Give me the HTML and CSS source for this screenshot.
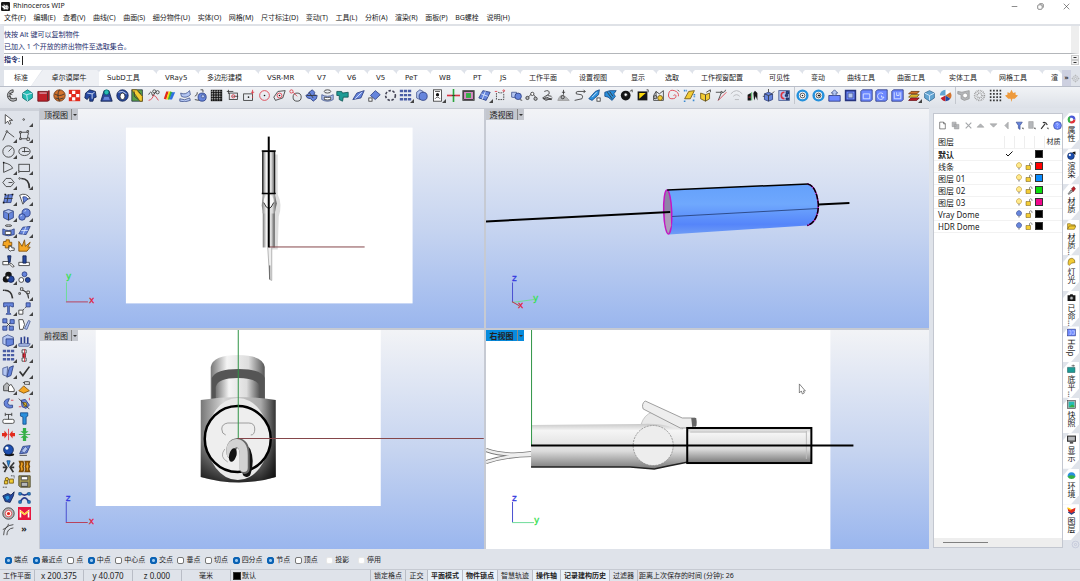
FILE: index.html
```
<!DOCTYPE html>
<html lang="zh-CN">
<head>
    <meta charset="UTF-8">
    <meta name="viewport" content="width=device-width, initial-scale=1.0">
    <title>Rhinoceros WIP</title>
    <link rel="stylesheet" href="styles.css">
</head>
<body>

<header class="titlebar">
    <svg class="logo" viewBox="0 0 16 16"><rect class="bk" width="16" height="16" rx="2"/><path class="wh" d="M1 6l3 1 1-4 2 3 4-1 3 4-2 5-4-1-3 1-1-3-3-2z"/><path d="M6 8l3 2M11 8v3"/></svg>
    <span>Rhinoceros WIP</span>
    <div class="window-buttons">
        <button aria-label="最小化"><svg viewBox="0 0 16 16"><path d="M3 8h10"/></svg></button>
        <button aria-label="还原"><svg viewBox="0 0 16 16"><rect x="3" y="5" width="8" height="8" rx="2"/><path d="M6 3h5a2 2 0 0 1 2 2v5"/></svg></button>
        <button aria-label="关闭"><svg viewBox="0 0 16 16"><path d="M3 3l10 10M13 3L3 13"/></svg></button>
    </div>
</header>

<nav class="menubar">
    <div class="menus">
        <a href="#">文件(F)</a>
        <a href="#">编辑(E)</a>
        <a href="#">查看(V)</a>
        <a href="#">曲线(C)</a>
        <a href="#">曲面(S)</a>
        <a href="#">细分物件(U)</a>
        <a href="#">实体(O)</a>
        <a href="#">网格(M)</a>
        <a href="#">尺寸标注(D)</a>
        <a href="#">变动(T)</a>
        <a href="#">工具(L)</a>
        <a href="#">分析(A)</a>
        <a href="#">渲染(R)</a>
        <a href="#">面板(P)</a>
        <a href="#">BG螺栓</a>
        <a href="#">说明(H)</a>
    </div>
</nav>

<section class="command">
    <div class="history">
        <p>快按 Alt 键可以复制物件</p>
        <p>已加入 1 个开放的挤出物件至选取集合。</p>
    </div>
    <div class="prompt">
        <label for="cmd">指令:</label>
        <input type="text" id="cmd">
        <div class="spin"><button aria-label="上"></button><button aria-label="下"></button></div>
    </div>
</section>

<div class="tabs">
    <button class="w27">标准</button>
    <button class="w68 active">卓尔谟犀牛</button>
    <button class="w58">SubD工具</button>
    <button class="w42">VRay5</button>
    <button class="w60">多边形建模</button>
    <button class="w50">VSR-MR</button>
    <button class="w30">V7</button>
    <button class="w29">V6</button>
    <button class="w29">V5</button>
    <button class="w34">PeT</button>
    <button class="w34">WB</button>
    <button class="w27">PT</button>
    <button class="w29">JS</button>
    <button class="w50">工作平面</button>
    <button class="w52">设置视图</button>
    <button class="w34">显示</button>
    <button class="w36">选取</button>
    <button class="w68">工作视窗配置</button>
    <button class="w42">可见性</button>
    <button class="w36">变动</button>
    <button class="w50">曲线工具</button>
    <button class="w52">曲面工具</button>
    <button class="w50">实体工具</button>
    <button class="w52">网格工具</button>
    <button class="last">渲</button>
    <div class="tabs-end"><button class="chev">»</button><svg viewBox="0 0 16 16"><circle cx="8" cy="8" r="5"/><circle cx="8" cy="8" r="2"/><path d="M8 1v3M8 12v3M1 8h3M12 8h3"/></svg></div>
</div>

<div class="toolbar">
    <div class="group g50">
        <button><svg viewBox="0 0 16 16"><path class="gy" d="M10 1a7 7 0 0 0 0 14l4-1v-3l-4 1a4 4 0 0 1 0-8z"/><path d="M5 5l4 2M4 9h3M6 13l2-2"/></svg></button>
        <button><svg viewBox="0 0 16 16"><path class="cy" d="M8 1l6 4v6l-6 4-6-4V5z"/><path class="lite" d="M2 5l5 2 7-2M7 7l1 8"/></svg></button>
        <button><svg viewBox="0 0 16 16"><path class="dr" d="M1 3h12l2-1v12l-2 1H1z"/><path class="lite" d="M3 5h9"/><path d="M13 4v10"/></svg></button>
        <button><svg viewBox="0 0 16 16"><circle class="og" cx="8" cy="8" r="7"/><path d="M2 6q6 4 12 0M3 11q5 3 10 0M8 1q-4 6 0 14"/></svg></button>
        <button><svg viewBox="0 0 16 16"><rect class="rf" x="1" y="1" width="14" height="14"/><path class="wf" d="M5 2h4v4H5zM10 6h4v4h-4zM5 10h4v4H5zM1 6h3v4H1z"/></svg></button>
        <button><svg viewBox="0 0 16 16"><path class="nv" d="M2 5l5-4 7 2 1 7-3 1-1 4H7V9l-3 4-3-2z"/><path class="lite" d="M4 5l6 1 3-2M10 6v6"/></svg></button>
        <button><svg viewBox="0 0 16 16"><path class="nv" d="M5 2h6l4 13H1z"/><path class="bl" d="M5 9h6l2 5H3z"/><circle class="cy" cx="8" cy="4" r="3"/></svg></button>
        <button><svg viewBox="0 0 16 16"><circle class="nv" cx="8" cy="8" r="7"/><ellipse class="wh" cx="8" cy="9" rx="3" ry="4"/><path class="lite" d="M3 4l5-1 5 3"/></svg></button>
        <button><svg viewBox="0 0 16 16"><path class="gn" d="M1 1h13v14H1z"/><path class="yl" d="M1 1h6l7 8v6h-3z"/><path d="M4 3v6l5 4M9 3l3 3"/></svg></button>
        <button><svg viewBox="0 0 16 16"><path class="rd" d="M2 14q5-1 6-7M7 7q4 1 7 7"/><path d="M2 7q3-6 4-1t4-2"/><circle cx="9" cy="3" r="2"/><circle cx="13" cy="4" r="2"/></svg></button>
        <button><svg viewBox="0 0 16 16"><path class="rf" d="M4 3h3L4 13l-3-1z"/><path class="yf" d="M7 3h3L7 13l-3 0z"/><path class="gf" d="M9 3l3 1-4 9-2 0z"/><path class="bf" d="M11 4l4 0-4 9-3 0z"/></svg></button>
        <button><svg viewBox="0 0 16 16"><path class="lb" d="M2 5q6 3 11-3l1 5q-5 5-11 2zM1 12q6 3 12-1l1 3q-7 3-13 1z"/></svg></button>
        <button><svg viewBox="0 0 16 16"><circle class="bl" cx="10" cy="10" r="5"/><circle class="lb" cx="11" cy="9" r="2"/><path d="M1 9q4-2 3-5M8 1h3v3M1 13l5 1"/></svg></button>
        <button><svg viewBox="0 0 16 16"><rect class="bk" x="1" y="1" width="14" height="14"/><path class="check" d="M1 3h14M1 6h14M1 9h14M1 12h14M3 1v14M6 1v14M9 1v14M12 1v14"/></svg></button>
        <button><svg viewBox="0 0 16 16"><rect x="4" y="5" width="10" height="8"/><path d="M1 3h8M3 1v5M9 9h6M7 9h1"/><circle class="rd" cx="9" cy="9" r="2"/></svg></button>
        <button><svg viewBox="0 0 16 16"><rect x="2" y="6" width="11" height="8"/><path class="rd" d="M13 1v6M11 4h4M13 9v2"/><circle class="bk" cx="8" cy="10" r="1"/></svg></button>
        <button><svg viewBox="0 0 16 16"><circle class="rd" cx="8" cy="8" r="6"/><circle class="bk" cx="8" cy="8" r="1"/></svg></button>
        <button><svg viewBox="0 0 16 16"><path d="M1 10l5-7 9-1-3 9-9 3z"/><circle class="rd" cx="8" cy="8" r="3"/><circle class="bk" cx="8" cy="8" r="1"/></svg></button>
        <button><svg viewBox="0 0 16 16"><circle cx="10" cy="10" r="5"/><circle class="rd" cx="3" cy="3" r="2"/><path class="rd" d="M5 4l5 5"/></svg></button>
        <button><svg viewBox="0 0 16 16"><path class="bl" d="M5 4l4-3 3 3-1 3 4 1-1 4-4 3-3-3-4-1-2-3 3-2z"/><path d="M5 4l5 7M2 8h12"/></svg></button>
        <button><svg viewBox="0 0 16 16"><path class="lb" d="M1 7q7 4 14 0v6q-7 4-14 0z"/><path class="wh" d="M4 10q4 1 8 0v3q-4 1-8 0z"/><ellipse cx="8" cy="3" rx="4" ry="2"/></svg></button>
        <button><svg viewBox="0 0 16 16"><path class="tl" d="M1 3h6l1 2 7-1v6H9l-1 5-4-2V8H1z"/></svg></button>
        <button><svg viewBox="0 0 16 16"><path class="bl" d="M1 13L6 5l9-3-4 9z"/><path class="lite" d="M4 12l8-8"/></svg></button>
        <button><svg viewBox="0 0 16 16"><path class="bl" d="M3 8l6-6 6 5-6 6z"/><rect class="wh" x="1" y="11" width="4" height="4"/></svg></button>
        <button><svg viewBox="0 0 16 16"><circle class="dots" cx="8" cy="8" r="6"/></svg></button>
        <button class="fly"><svg viewBox="0 0 16 16"><path class="dotgrid" d="M3 1v14M8 1v14M13 1v14"/></svg></button>
        <button><svg viewBox="0 0 16 16"><path class="lb" d="M2 4l4-3 4 2v8l-4 2-4-2z"/><circle class="bl" cx="10" cy="9" r="5"/></svg></button>
        <button class="fly"><svg viewBox="0 0 16 16"><rect class="wh" x="3" y="1" width="10" height="14"/><circle class="bk" cx="8" cy="7" r="2"/><path d="M5 12q3-4 6 0M5 3h6"/></svg></button>
        <button><svg viewBox="0 0 16 16"><path class="rd thick" d="M0 8h16"/><path class="grn thick" d="M8 0v16"/><path d="M6 8h4"/></svg></button>
        <button><svg viewBox="0 0 16 16"><rect class="wh" x="1" y="2" width="14" height="12"/><rect class="pk" x="2" y="3" width="12" height="10"/><rect class="gf" x="5" y="5" width="6" height="6"/></svg></button>
        <button class="fly"><svg viewBox="0 0 16 16"><path class="bl" d="M1 11l5-9 9 2-5 10z"/><path class="lite" d="M4 6l8 3M9 3l-4 10"/></svg></button>
        <button><svg viewBox="0 0 16 16"><path d="M3 13V5M5 4q4 2 8-1M12 6v7H4" stroke-dasharray="2 1"/><circle class="rd" cx="12" cy="2" r="1"/><path class="rd" d="M1 3h3"/></svg></button>
        <button><svg viewBox="0 0 16 16"><path class="lb" d="M2 4l6 0v7l-6-1z"/><circle class="bl" cx="10" cy="9" r="4"/><path d="M12 13l3 1"/></svg></button>
        <button><svg viewBox="0 0 16 16"><path d="M3 11l6-6 4 5"/><circle class="gy" cx="3" cy="11" r="2"/><circle class="wh" cx="9" cy="6" r="2"/><circle class="gy" cx="13" cy="12" r="2"/></svg></button>
        <button><svg viewBox="0 0 16 16"><path d="M4 3q7-3 6 3l-8 5 4 3 8-3M8 8l5 1"/><path class="gy" d="M3 12l4-2 6 3z"/></svg></button>
        <button><svg viewBox="0 0 16 16"><path d="M8 1v6M6 4h4"/><path class="gy lt" d="M1 14q3-8 7-6t7 6z"/><circle class="gy" cx="7" cy="10" r="2"/></svg></button>
        <button><svg viewBox="0 0 16 16"><path d="M15 3H6q-3 0-2 3l6 1q3 1 1 5L2 14"/><path d="M13 1l2 2-2 2"/></svg></button>
        <button><svg viewBox="0 0 16 16"><path class="cb" d="M1 12L9 3l5-2-1 6-8 7z"/><path class="lite" d="M5 10l6-6"/><rect class="wh" x="11" y="11" width="4" height="4"/></svg></button>
        <button><svg viewBox="0 0 16 16"><path class="cb" d="M1 4l6-2 8 0-3 4 2 3-4 5-5-4-4-1z"/><path d="M4 4l6 8M7 3l4 6"/></svg></button>
        <button><svg viewBox="0 0 16 16"><circle class="bk" cx="7" cy="8" r="6"/><circle class="wh" cx="7" cy="7" r="2"/><path d="M12 3l3-2v3"/></svg></button>
        <button><svg viewBox="0 0 16 16"><rect class="bk" x="2" y="3" width="12" height="11"/><path class="yf" d="M4 12V5h8z"/><path d="M13 1h2v3"/></svg></button>
        <button><svg viewBox="0 0 16 16"><path d="M2 14V8l3-5 4 3 5-4v12zM5 3v9"/><circle class="yl" cx="10" cy="11" r="3"/><circle class="gy" cx="4" cy="10" r="2"/></svg></button>
        <button><svg viewBox="0 0 16 16"><path class="rd" d="M8 8q3-2 3 1t-5 3-4-6 7-4 5 7"/><path d="M13 1l2 2"/></svg></button>
        <button><svg viewBox="0 0 16 16"><path class="yl" d="M2 12L7 3l7-1-5 10z"/><path class="dotb" d="M1 2h4M12 14h3M1 15h3M14 6v4"/></svg></button>
        <button><svg viewBox="0 0 16 16"><path class="yl" d="M2 5l6 2 5-2v7l-5 3-6-3z"/><path d="M8 7v8M9 4l5-3v3"/></svg></button>
        <button><svg viewBox="0 0 16 16"><path d="M1 4h7L4 14M8 4q4 1 5-3"/><path class="rd" d="M4 14L14 4"/><circle class="wh" cx="8" cy="4" r="1"/></svg></button>
        <button><svg viewBox="0 0 16 16"><path class="pale" d="M1 6q7-8 14 0M4 9q4-4 8 0M6 13h5"/></svg></button>
        <button><svg viewBox="0 0 16 16"><path class="bk" d="M2 7l4-2v9H2zM9 5l2-3 3 3 0 9-2-5-2 5z"/><path class="grn" d="M7 4v10"/><path class="rd" d="M3 10h3"/></svg></button>
        <button><svg viewBox="0 0 16 16"><path class="bl" d="M3 6l5-2 5 2v7l-5 2-5-2z"/><path d="M3 6l5 2 5-2M8 8v7M8 0v4M1 9h2M13 5l2-2"/></svg></button>
        <button><svg viewBox="0 0 16 16"><rect class="lb" x="1" y="2" width="13" height="12"/><path class="rd thick" d="M8 4q-4 0-4 4t4 4"/><path class="nv" d="M10 3h3v3h-3zM9 7h3v2H9zM10 11h3v2h-3z"/></svg></button>
    </div>
    <div class="group g10">
        <button><svg viewBox="0 0 16 16"><circle class="ring" cx="8" cy="8" r="6"/><circle class="wh" cx="8" cy="8" r="3"/><circle class="bk" cx="8" cy="8" r="1"/></svg></button>
        <button><svg viewBox="0 0 16 16"><circle class="ring" cx="8" cy="8" r="6"/><circle class="wh" cx="8" cy="8" r="3"/><path class="bk" d="M7 7h3v2H7z"/></svg></button>
        <button><svg viewBox="0 0 16 16"><path class="vb" d="M1 8h14v7H1z"/><path class="lb" d="M6 8V5H4l4-4 4 4h-2v3z"/></svg></button>
        <button><svg viewBox="0 0 16 16"><path class="vb thick" d="M2 2h12v12H2z"/><path class="lb" d="M5 5h6v6H5z"/></svg></button>
        <button><svg viewBox="0 0 16 16"><path class="vb" d="M1 3l2-2h12v12l-2 2H1z"/><path class="lite" d="M4 6h8v6H4z"/></svg></button>
        <button><svg viewBox="0 0 16 16"><path class="vb" d="M1 3l2-2h12v12l-2 2H1z"/><path class="lite" d="M10 6a4 4 0 1 0 1 4H8V8"/></svg></button>
        <button><svg viewBox="0 0 16 16"><path class="vb" d="M1 3l2-2h12v12l-2 2H1z"/><path class="lite" d="M4 4v8h8V4M7 4v4h3V4"/></svg></button>
        <button class="fly"><svg viewBox="0 0 16 16"><path class="dr" d="M2 14l3-3h10l-3 3z"/><path class="yl" d="M2 10l3-3h10l-3 3z"/><path class="og" d="M2 6l3-3h10l-3 3z"/></svg></button>
        <button><svg viewBox="0 0 16 16"><path class="sb" d="M2 5l6-3 6 3v6l-6 4-6-4z"/><path class="lite" d="M2 5l6 3 6-3M8 8v6"/></svg></button>
        <button><svg viewBox="0 0 16 16"><circle class="wf" cx="8" cy="8" r="7"/><path class="dr nos" d="M8 8V15A7 7 0 0 1 2 11z"/><path class="og nos" d="M8 8l6-4a7 7 0 0 1 0 8z"/><path class="nv nos" d="M8 8l6 4a7 7 0 0 1-6 3z"/><path class="sb nos" d="M8 8L1 8a7 7 0 0 1 7-7z"/></svg></button>
    </div>
    <div class="group g4">
        <button><svg viewBox="0 0 16 16"><path class="gy lt" d="M1 3l5 1 9-2v10l-6 2-4-2V7L1 6z"/><circle class="wh lt" cx="10" cy="8" r="3"/></svg></button>
        <button><svg viewBox="0 0 16 16"><circle class="mesh" cx="8" cy="8" r="6"/><circle class="mesh" cx="8" cy="8" r="3"/></svg></button>
        <button><svg viewBox="0 0 16 16"><path class="dotgrid blk" d="M2 1v14M6 1v14M10 1v14M14 1v14"/></svg></button>
        <button><svg viewBox="0 0 16 16"><path class="lf" d="M8 1l2 4 3-1 0 3 3 1-4 4-3 0-1 4-1-4-3 0-4-4 3-1V4l3 1z"/></svg></button>
    </div>
</div>

<main>
    <aside class="sidebar">
        <button><svg viewBox="0 0 16 16"><path class="wh" d="M4 2v11l3-3 2 4 2-1-2-4h4z"/></svg></button>
        <button class="fly"><svg viewBox="0 0 16 16"><circle class="wh" cx="7" cy="8" r="1"/></svg></button>
        <button class="fly"><svg viewBox="0 0 16 16"><path d="M1 14L6 3l9 7"/><circle class="wh" cx="6" cy="3" r="1"/></svg></button>
        <button class="fly"><svg viewBox="0 0 16 16"><path d="M3 4h8q3 0 1 4v4M3 4v8h9"/><path class="wh" d="M2 3h2v2H2zM11 2h2v2h-2zM11 11h3v3h-3zM2 11h2v2H2z"/></svg></button>
        <button class="fly"><svg viewBox="0 0 16 16"><circle cx="8" cy="8" r="7"/><path d="M8 8l4-4"/></svg></button>
        <button class="fly"><svg viewBox="0 0 16 16"><ellipse cx="8" cy="8" rx="7" ry="5"/><path d="M8 3v6M5 8h9"/></svg></button>
        <button class="fly"><svg viewBox="0 0 16 16"><path d="M2 14V2q10 2 11 7L2 14"/><circle class="bk" cx="2" cy="2" r="1"/></svg></button>
        <button class="fly"><svg viewBox="0 0 16 16"><rect x="1" y="4" width="13" height="9"/><circle class="wh" cx="1" cy="13" r="1"/></svg></button>
        <button class="fly"><svg viewBox="0 0 16 16"><path d="M5 3h6l4 5-4 5H5L1 8z"/><path d="M8 8h5"/></svg></button>
        <button class="fly"><svg viewBox="0 0 16 16"><path class="thick" d="M4 3q10 0 10 12"/><circle class="wh" cx="2" cy="3" r="1"/></svg></button>
        <button class="fly"><svg viewBox="0 0 16 16"><path class="bl" d="M4 4l9-1-2 10-9 0z"/><path d="M8 3L6 13M3 8h10"/><path class="bk" d="M3 2h2v2H3zM12 2h2v2h-2zM1 12h2v2H1z"/></svg></button>
        <button class="fly"><svg viewBox="0 0 16 16"><path class="wh" d="M2 4q8-4 13 4l-5 1-4 6z"/><path class="bl" d="M6 6q5-1 6 3l-5 4z"/></svg></button>
        <button class="fly"><svg viewBox="0 0 16 16"><path class="bl" d="M2 4l6-2 6 2v8l-6 3-6-3z"/><path class="lb" d="M2 4l6-2 6 2-6 3z"/><path d="M8 7v8"/></svg></button>
        <button class="fly"><svg viewBox="0 0 16 16"><circle class="bl" cx="10" cy="6" r="5"/><circle class="bl" cx="5" cy="11" r="4"/><path class="lite" d="M8 4l2-1M3 10l2-1"/></svg></button>
        <button class="fly"><svg viewBox="0 0 16 16"><path class="bl" d="M1 6q7 4 14 0v7q-7 3-14 0z"/><path class="wh" d="M4 9h7v4H4z"/><ellipse cx="8" cy="2" rx="4" ry="1"/></svg></button>
        <button class="fly"><svg viewBox="0 0 16 16"><path class="bl" d="M1 12l5-8 9-1-5 10z"/><path class="lite" d="M4 8l8 0M10 3l-4 10"/></svg></button>
        <button><svg viewBox="0 0 16 16"><path class="og2" d="M2 3h3V1h4v3h3v4H8v3H4V8H1z"/><path class="wh" d="M9 9h3v2h3v3h-3l-2 1-2-2z"/></svg></button>
        <button><svg viewBox="0 0 16 16"><path class="og2" d="M1 15V3l4 6 3-8 1 8 6-5-3 6 3 0-4 5z"/></svg></button>
        <button><svg viewBox="0 0 16 16"><path class="wh" d="M1 8h7v4H1zM11 10l4 4-2 1-4-4z"/><path class="nv" d="M7 1h4l-1 8H8z"/></svg></button>
        <button><svg viewBox="0 0 16 16"><path class="wh" d="M1 9h13v4H1z"/><path class="nv" d="M6 1h4v9H6z"/></svg></button>
        <button class="fly"><svg viewBox="0 0 16 16"><circle class="bk" cx="8" cy="5" r="4"/><circle class="bk" cx="5" cy="10" r="4"/><circle class="nv" cx="11" cy="10" r="4"/><circle class="wh" cx="7" cy="8" r="2"/></svg></button>
        <button><svg viewBox="0 0 16 16"><circle class="bl" cx="8" cy="4" r="3"/><circle class="wh" cx="4" cy="11" r="3"/><circle class="nv" cx="12" cy="11" r="3"/></svg></button>
        <button><svg viewBox="0 0 16 16"><path class="thick" d="M3 4q9 0 10 10"/><circle class="bk" cx="2" cy="4" r="1"/></svg></button>
        <button class="fly"><svg viewBox="0 0 16 16"><path d="M4 3q8 3 9 11M4 3l8 4 1 7"/><path class="wh" d="M3 1h3v3H3zM1 7h2v2H1zM11 5h3v3h-3z"/></svg></button>
        <button class="fly"><svg viewBox="0 0 16 16"><path class="bl" d="M2 1h12v5h-2l-1-1H9v8l2 2H5l2-2V5H5L4 6H2z"/></svg></button>
        <button class="fly"><svg viewBox="0 0 16 16"><path d="M4 12l8-8" stroke-dasharray="2 1"/><path class="wh" d="M1 10h5v5H1z"/><path class="bl" d="M10 1h5v5h-5z"/></svg></button>
        <button><svg viewBox="0 0 16 16"><path d="M4 4l8 8M12 4l-8 8"/><path class="bl" d="M1 1h5v5H1zM10 2h5v5h-5zM1 10h5v5H1zM9 10h5v5H9z"/></svg></button>
        <button><svg viewBox="0 0 16 16"><path class="wh" d="M1 2h5l2 6-2 6H2z"/><path class="lb" d="M8 13l5-10 2 1-4 10z"/></svg></button>
        <button class="fly"><svg viewBox="0 0 16 16"><path class="lb" d="M1 4l6-3 7 3v8l-7 3-6-3z"/><path class="bl" d="M5 6h9v7l-7 2-2-2z"/></svg></button>
        <button class="fly"><svg viewBox="0 0 16 16"><path class="lb" d="M1 12h14l-2 3H1z"/><path class="nvl" d="M4 4v8M8 3v8M12 4v8"/></svg></button>
        <button class="fly"><svg viewBox="0 0 16 16"><path class="dotgrid" d="M3 1v14M8 1v14M13 1v14"/></svg></button>
        <button class="fly"><svg viewBox="0 0 16 16"><path class="wh" d="M5 1h5v4H5zM5 11h5v4H5z"/><path class="dr" d="M6 6h3v4H6z"/><path class="rd" d="M8 0v16"/></svg></button>
        <button class="fly"><svg viewBox="0 0 16 16"><path class="lb" d="M1 4l6-2-1 12-5-2z"/><path class="bl" d="M9 3l5-2-3 12-5 2z"/></svg></button>
        <button class="fly"><svg viewBox="0 0 16 16"><path class="thick" d="M2 8l4 5L14 2"/></svg></button>
        <button class="fly"><svg viewBox="0 0 16 16"><path class="gy" d="M2 12V6l4-4 4 4v6z"/><path class="wh" d="M8 13V7l3-3 4 6v3z"/></svg></button>
        <button class="fly"><svg viewBox="0 0 16 16"><path class="og2" d="M1 12l6-6 7 6-7 3z"/><path d="M6 2l6-1 2 4"/><path class="wh" d="M8 1h6v3H8z"/></svg></button>
        <button><svg viewBox="0 0 16 16"><path class="bl" d="M9 2q-8 1-6 8 3 5 10 3v-3q-6 1-6-3z"/><path class="rd" d="M11 4h3"/></svg></button>
        <button><svg viewBox="0 0 16 16"><path class="bl" d="M4 4l5-1 5 7-4 4-5-2z"/><path class="yl" d="M6 7l4 0 1 4-3 1z"/><path d="M1 2l13 13"/><path class="rd" d="M14 1v3M1 12h3"/></svg></button>
        <button><svg viewBox="0 0 16 16"><rect class="wh" x="1" y="9" width="14" height="5" rx="2"/><path d="M4 3h8M4 1v4M12 1v4M8 3v6"/></svg></button>
        <button><svg viewBox="0 0 16 16"><path class="cb" d="M3 1h9v4l-2 1v9H6V6L3 5z"/></svg></button>
        <button><svg viewBox="0 0 16 16"><path class="rf" d="M0 6h3V3l4 5-4 5v-3H0zM16 6h-3V3L9 8l4 5v-3h3z"/><path class="rd" d="M8 1v14"/></svg></button>
        <button><svg viewBox="0 0 16 16"><path class="gf" d="M6 0h4v4h3L8 8 3 4h3zM6 16h4v-4h3L8 8l-5 4h3z"/><path class="grn" d="M1 8h14"/></svg></button>
        <button><svg viewBox="0 0 16 16"><ellipse class="bk" cx="9" cy="13" rx="6" ry="2"/><circle class="sph" cx="8" cy="7" r="6"/><circle class="wf" cx="6" cy="5" r="2"/></svg></button>
        <button><svg viewBox="0 0 16 16"><path class="bl" d="M2 12L6 3l9-1-4 9z"/><path class="lb" d="M4 9l5-6 3 3-4 5z"/><path d="M2 14h9"/></svg></button>
        <button><svg viewBox="0 0 16 16"><path class="thick" d="M1 3l5 6-3 6M15 3l-5 6 4 6"/><path class="cb" d="M6 1h4l-2 7z"/><path class="thick" d="M1 9h5M10 9h5"/></svg></button>
        <button><svg viewBox="0 0 16 16"><path class="og2 thick" d="M2 2h4l1 3-1 3 1 3-1 3H2l1-3-1-3 1-3zM9 2h5l-1 3 1 3-1 3 1 3H9l1-3-1-3 1-3z"/></svg></button>
        <button><svg viewBox="0 0 16 16"><path class="yl" d="M3 7h4v4H3zM9 5h5v5H9z"/><path d="M1 15h5M11 1h4v3" stroke-dasharray="2 1"/><circle class="yl" cx="6" cy="5" r="2"/></svg></button>
        <button><svg viewBox="0 0 16 16"><path class="kh" d="M1 1h14v14H3l-2-2z"/><path class="wh" d="M4 2h8v4H4z"/><path class="gy" d="M4 9h8v5H4z"/></svg></button>
        <button><svg viewBox="0 0 16 16"><path class="nv" d="M1 6l6-3 4 2 4-4-1 5-4 8-6-1z"/><path class="cb" d="M3 7l5-2 2 4-4 3z"/></svg></button>
        <button><svg viewBox="0 0 16 16"><path class="nvl" d="M3 3q5 4 10 0M3 13q5-9 10 0"/><path class="cb" d="M1 2h3v3H1zM12 2h3v3h-3zM1 12h3v3H1zM12 12h3v3h-3z"/></svg></button>
        <button><svg viewBox="0 0 16 16"><circle class="gy" cx="8" cy="8" r="7"/><circle class="rd wf2" cx="8" cy="8" r="4"/><circle class="rf" cx="8" cy="8" r="2"/></svg></button>
        <button><svg viewBox="0 0 16 16"><rect class="mred" x="0" y="0" width="16" height="16"/><path class="wl" d="M3 13V5l5 4 5-4v8"/><path class="yel" d="M3 5l5 4 5-4"/></svg></button>
        <button><svg viewBox="0 0 16 16"><path d="M2 15Q2 3 14 2M6 15q0-8 8-9M1 8q6-2 7-7"/></svg></button>
        <button class="more">»</button>
    </aside>

    <section class="viewports">
        <div class="viewport">
            <svg class="scene" viewBox="40 109 444 220" preserveAspectRatio="xMidYMid slice">
                <defs>
                    <linearGradient id="metal"><stop offset="0" stop-color="#777"/><stop offset=".3" stop-color="#f4f4f4"/><stop offset=".7" stop-color="#ddd"/><stop offset="1" stop-color="#555"/></linearGradient>
                    <linearGradient id="metalDown" x2="0" y2="1"><stop offset="0" stop-color="#c8c8c8"/><stop offset=".15" stop-color="#f5f5f5"/><stop offset=".6" stop-color="#dcdcdc"/><stop offset="1" stop-color="#777"/></linearGradient>
                    <linearGradient id="blueDown" x2="0" y2="1"><stop offset="0" stop-color="#64a0fb"/><stop offset=".4" stop-color="#6fa8fd"/><stop offset=".8" stop-color="#5585fa"/><stop offset="1" stop-color="#6f9cf5"/></linearGradient>
                    <linearGradient id="block"><stop offset="0" stop-color="#777"/><stop offset=".3" stop-color="#d5d5d5"/><stop offset=".8" stop-color="#aaa"/><stop offset="1" stop-color="#333"/></linearGradient>
                    <linearGradient id="blockShade" x2="0" y2="1"><stop offset=".5" stop-color="#000" stop-opacity="0"/><stop offset="1" stop-color="#000" stop-opacity=".8"/></linearGradient>
                </defs>
                <rect x="126" y="128" width="287" height="176" fill="#fff"/>
                <path d="M266 155h12v40q5 10 1 22l-1 33h-8z" fill="#ddd"/>
                <rect x="263" y="212" width="12" height="36" fill="url(#metal)"/>
                <path d="M263 194h12l2 10-2 10h-12l-1-8z" fill="url(#metal)"/>
                <ellipse cx="269" cy="202" rx="5" ry="7" fill="#f8f8f8"/>
                <path d="M264 203q5 12 10 0" fill="none" stroke="#333"/>
                <rect x="263" y="152" width="12" height="42" fill="url(#metal)" stroke="#000"/>
                <path d="M262 151.500h14M262 194h14" stroke="#000" stroke-width="1.500"/>
                <path d="M268 248l2 32 2 1 0-33" fill="#eee" stroke="#999" stroke-width=".7"/>
                <path d="M270 266v14" stroke="#555"/>
                <path d="M269 247.500h96" stroke="#85464a"/>
                <path d="M269 137v111" stroke="#000" stroke-width="2"/>
                <path d="M66.500 283v19" stroke="#6fdc9a"/><path d="M66 302.500h22" stroke="#b8435c"/>
                <text class="ax-y" x="66" y="280">y</text><text class="ax-x" x="89" y="304">x</text>
            </svg>
            <div class="vp-label"><span>顶视图</span><button aria-label="视图菜单"></button></div>
        </div>

        <div class="viewport">
            <svg class="scene" viewBox="486 109 443 220" preserveAspectRatio="xMidYMid slice">
                <path d="M667 190.500L808 184.500Q816 186 818 205Q818 222 807 226L669 235z" fill="url(#blueDown)"/>
                <ellipse cx="667.500" cy="212.500" rx="4" ry="22" fill="#8f83a6" stroke="#c615c4" stroke-width="1.500" transform="rotate(-2 667 212)"/>
                <path d="M665 212h5l1 14-3 8q-4-8-3-22z" fill="#b09cba"/>
                <path d="M486 222l184-9.500" stroke="#000" stroke-width="2"/>
                <path d="M667 190.500l141-6" stroke="#000" stroke-width="1.500"/>
                <path d="M672 217l146-8" stroke="#223a70" stroke-width=".8"/>
                <path d="M807 184.500Q816 186 818 205Q818 222 807 226" fill="none" stroke="#c615c4" stroke-width="1.500"/>
                <path d="M807 184.500Q816 186 818 205Q818 222 807 226" fill="none" stroke="#000" stroke-width="1.500" stroke-dasharray="6 1"/>
                <path d="M818 205l31-1.500" stroke="#000" stroke-width="2"/>
                <path d="M512.500 283v20" stroke="#4b50d0"/><path d="M512 303l22-3" stroke="#6fdc9a"/><path d="M512 302l7 4" stroke="#c8304a"/>
                <text class="ax-z" x="512" y="281">z</text><text class="ax-y" x="533" y="301">y</text><text class="ax-x" x="518" y="308">x</text>
            </svg>
            <div class="vp-label"><span>透视图</span><button aria-label="视图菜单"></button></div>
        </div>

        <div class="viewport">
            <svg class="scene" viewBox="40 331 444 219" preserveAspectRatio="xMidYMid slice">
                <rect x="96" y="331" width="285" height="176" fill="#fff"/>
                <path d="M211 400v-32q2-12 27-12t27 12v32z" fill="url(#metal)"/>
                <path d="M212 379q4-9 27-9t26 9v21h-53z" fill="#555"/>
                <path d="M216 400v-12q2-9 22-9t22 9v12z" fill="url(#metal)"/>
                <path d="M201 401q37-6 75 0v77q-36 11-75 0z" fill="url(#block)"/>
                <path d="M201 401q37-6 75 0v77q-36 11-75 0z" fill="url(#blockShade)"/>
                <ellipse cx="238" cy="440" rx="31" ry="41" fill="#e9e9e9"/>
                <circle cx="238" cy="440" r="33" fill="#eee" stroke="#000" stroke-width="2.500"/>
                <path d="M226 436q-4-1-4-6t6-6h21q6 0 6 6t-4 6" fill="none" stroke="#888" stroke-width=".8"/>
                <path d="M225 450q-6 8 3 13" fill="none" stroke="#999" stroke-width=".8"/>
                <path d="M247 452q4 10 0 22" fill="none" stroke="#111" stroke-width="8" stroke-linecap="round"/>
                <path d="M232 455q-2-10 6-11 7 1 7 12l0 14" fill="none" stroke="#666" stroke-width="10" stroke-linecap="round"/>
                <path d="M231 455q-2-10 6-11 7 1 7 12l0 13" fill="none" stroke="#d2d2d2" stroke-width="8" stroke-linecap="round"/>
                <ellipse cx="233" cy="456" rx="3.500" ry="7" fill="#111" transform="rotate(15 233 456)"/>
                <path d="M238.500 331v109" stroke="#2f9446"/><path d="M238 439.500h246" stroke="#85464a"/>
                <path d="M66.500 503v20" stroke="#4b50d0"/><path d="M66 523.500h22" stroke="#b8435c"/>
                <text class="ax-z" x="66" y="502">z</text><text class="ax-x" x="89" y="525">x</text>
            </svg>
            <div class="vp-label"><span>前视图</span><button aria-label="视图菜单"></button></div>
        </div>

        <div class="viewport">
            <svg class="scene" viewBox="486 331 443 219" preserveAspectRatio="xMidYMid slice">
                <rect x="486" y="331" width="344" height="219" fill="#fff"/>
                <path d="M486 451q20 7 46 3M486 463q22-7 46-7" fill="none" stroke="#777" stroke-width="4"/>
                <path d="M486 451q20 7 46 3M486 463q22-7 46-7" fill="none" stroke="#eee" stroke-width="2.500"/>
                <path d="M641 425q3-9 11-12l32 14-6 10z" fill="#e8e8e8" stroke="#aaa" stroke-width=".6"/>
                <path d="M531 426l110-1q20-1 32 4l14 2v32l-22 5-12 2-23-2H531z" fill="url(#metalDown)"/>
                <path d="M531 468h99l24 2 14-3 20-4" fill="none" stroke="#222" stroke-width="1.500"/>
                <path d="M645 402q-4 3-2 8l37 19 14 0q4-4 1-10l-13 0z" fill="#eee" stroke="#888" stroke-width=".8"/>
                <path d="M691 419l5 0v8l-4 1z" fill="#666"/>
                <circle cx="653" cy="446.500" r="20" fill="#ededed" stroke="#888" stroke-dasharray="2 1" stroke-width=".8"/>
                <rect x="687" y="429" width="124" height="35" fill="url(#metalDown)" stroke="#000" stroke-width="2"/>
                <path d="M690 433h116M806 432v28" stroke="#bbb" fill="none"/>
                <path d="M531.500 331v116" stroke="#2f9446"/>
                <path d="M531 446.500h322" stroke="#000" stroke-width="2"/>
                <path d="M512.500 503v20" stroke="#4b50d0"/><path d="M512 523.500h22" stroke="#6fdc9a"/>
                <text class="ax-z" x="512" y="502">z</text><text class="ax-y" x="534" y="524">y</text>
                <path d="M799 385v9l2-2 1 3 2-1-1-2h2z" fill="#fff" stroke="#555" stroke-width=".7"/>
            </svg>
            <div class="vp-label current"><span>右视图</span><button aria-label="视图菜单"></button></div>
        </div>
    </section>

    <aside class="layers">
        <div class="layer-tools">
            <button><svg viewBox="0 0 16 16"><path class="wh" d="M3 2h7l3 3v9H3z"/><path d="M10 2v3h3"/></svg></button>
            <button><svg viewBox="0 0 16 16"><path class="gy lt" d="M2 2h7v8H2zM6 6h8v8H6z"/></svg></button>
            <button><svg viewBox="0 0 16 16"><path class="gyl" d="M3 3l10 10M13 3L3 13"/></svg></button>
            <button><svg viewBox="0 0 16 16"><path class="gy lt" d="M2 11l6-6 6 6z"/></svg></button>
            <button><svg viewBox="0 0 16 16"><path class="gy lt" d="M2 5l6 6 6-6z"/></svg></button>
            <button><svg viewBox="0 0 16 16"><path class="gy lt" d="M11 2L5 8l6 6z"/></svg></button>
            <button><svg viewBox="0 0 16 16"><path class="bl" d="M2 2h11L9 8v7l-3-2V8z"/><path class="bk" d="M12 12h3v3z"/></svg></button>
            <button><svg viewBox="0 0 16 16"><path class="gy lt" d="M3 1h8v12H3z"/><path class="bk" d="M12 12h3v3z"/></svg></button>
            <button><svg viewBox="0 0 16 16"><path class="thick" d="M2 14l7-9M5 3q5-2 8 4"/><path class="bk" d="M12 12h3v3z"/></svg></button>
            <button><svg viewBox="0 0 16 16"><circle class="vb" cx="8" cy="8" r="7"/><path class="lite" d="M6 6q0-3 2-2 3 1 0 4v1M8 11v2"/></svg></button>
        </div>
        <table>
            <thead>
                <tr><th class="name">图层</th><th></th><th></th><th></th><th></th><th class="mat">材质</th></tr>
            </thead>
            <tbody>
                <tr class="default"><td>默认</td><td><svg viewBox="0 0 16 16"><path class="tick" d="M2 8l4 4 9-9"/></svg></td><td></td><td></td><td><i class="sw black"></i></td><td></td></tr>
                <tr><td>线条</td><td></td><td><svg viewBox="0 0 16 16"><use href="#bulb"/></svg></td><td><svg viewBox="0 0 16 16"><use href="#lock"/></svg></td><td><i class="sw red"></i></td><td></td></tr>
                <tr><td>图层 01</td><td></td><td><svg viewBox="0 0 16 16"><use href="#bulb"/></svg></td><td><svg viewBox="0 0 16 16"><use href="#lock"/></svg></td><td><i class="sw blue"></i></td><td></td></tr>
                <tr><td>图层 02</td><td></td><td><svg viewBox="0 0 16 16"><use href="#bulb"/></svg></td><td><svg viewBox="0 0 16 16"><use href="#lock"/></svg></td><td><i class="sw green"></i></td><td></td></tr>
                <tr><td>图层 03</td><td></td><td><svg viewBox="0 0 16 16"><use href="#bulb"/></svg></td><td><svg viewBox="0 0 16 16"><use href="#lock"/></svg></td><td><i class="sw pink"></i></td><td></td></tr>
                <tr><td>Vray Dome</td><td></td><td><svg viewBox="0 0 16 16"><use href="#bulb-off"/></svg></td><td><svg viewBox="0 0 16 16"><use href="#lock"/></svg></td><td><i class="sw black"></i></td><td></td></tr>
                <tr><td>HDR Dome</td><td></td><td><svg viewBox="0 0 16 16"><use href="#bulb-off"/></svg></td><td><svg viewBox="0 0 16 16"><use href="#lock"/></svg></td><td><i class="sw black"></i></td><td></td></tr>
            </tbody>
        </table>
        <div class="scrollbar"><div class="thumb"></div></div>
    </aside>

    <nav class="side-tabs">
        <button><svg viewBox="0 0 16 16"><circle class="w-r" cx="8" cy="8" r="5" pathLength="100"/><circle class="w-g" cx="8" cy="8" r="5" pathLength="100"/><circle class="w-b" cx="8" cy="8" r="5" pathLength="100"/></svg>属性</button>
        <button><svg viewBox="0 0 16 16"><circle class="sph" cx="7" cy="9" r="6"/><path class="bk" d="M9 2l6-1v6z"/><circle class="wf" cx="5" cy="7" r="2"/></svg>渲染</button>
        <button><svg viewBox="0 0 16 16"><path class="gy" d="M2 14L7 7l3 3-7 5z"/><path class="dr" d="M8 5l4-4 3 4-4 5z"/></svg>材质</button>
        <button><svg viewBox="0 0 16 16"><path class="yl" d="M1 13V3h5l2 2h6v3"/><path class="yl" d="M1 13l3-6h12l-3 6z"/></svg>材质…</button>
        <button><svg viewBox="0 0 16 16"><path class="yl" d="M2 9q0-7 7-7 6 2 5 8l-6 1-4 4-2-2z"/></svg>灯光</button>
        <button><svg viewBox="0 0 16 16"><path class="bk" d="M1 4h4l1-2h4l1 2h4v10H1z"/><circle class="gy" cx="8" cy="9" r="3"/></svg>已命…</button>
        <button><svg viewBox="0 0 16 16"><rect class="vb" x="1" y="2" width="14" height="12"/><path class="lite" d="M4 5h3v6H4M9 5h4v6H9"/></svg>Help</button>
        <button><svg viewBox="0 0 16 16"><path class="tl" d="M1 6h13v9H1z"/><path d="M8 3h6M11 1v4"/></svg>底平…</button>
        <button><svg viewBox="0 0 16 16"><rect class="gy" x="1" y="1" width="14" height="14"/><path class="cy nos" d="M3 3h10v10H3z"/><path class="gf" d="M3 13l6-5 4 2v3z"/></svg>快照</button>
        <button><svg viewBox="0 0 16 16"><rect class="gy thick" x="1" y="2" width="14" height="9"/><path class="bk" d="M5 13h6v2H5z"/></svg>显示</button>
        <button><svg viewBox="0 0 16 16"><path class="cb nos" d="M1 10q0-8 7-8t7 8z"/><path class="gf" d="M1 10q7-5 14 0-2 4-7 4t-7-4z"/></svg>环境</button>
        <button class="active"><svg viewBox="0 0 16 16"><path class="nv" d="M2 11l6-3 6 3-6 4z"/><path class="rf" d="M1 3l7 3 7-3-1 6-6 4-6-4z"/><path class="yf" d="M1 2l6 3 0 3-6-3z"/></svg>图层</button>
        <svg class="gear" viewBox="0 0 16 16"><circle cx="8" cy="8" r="6"/><circle cx="8" cy="8" r="2"/></svg>
    </nav>
</main>

<form class="osnap">
    <label><input type="checkbox" checked>端点</label>
    <label><input type="checkbox" checked>最近点</label>
    <label><input type="checkbox">点</label>
    <label><input type="checkbox" checked>中点</label>
    <label><input type="checkbox">中心点</label>
    <label><input type="checkbox" checked>交点</label>
    <label><input type="checkbox">垂点</label>
    <label><input type="checkbox">切点</label>
    <label><input type="checkbox" checked>四分点</label>
    <label><input type="checkbox" checked>节点</label>
    <label><input type="checkbox">顶点</label>
    <label class="plain"><input type="checkbox">投影</label>
    <label class="plain"><input type="checkbox">停用</label>
</form>

<footer class="status">
    <span class="w35">工作平面</span>
    <span class="w49 num">x 200.375</span>
    <span class="w49 num">y 40.070</span>
    <span class="w49 num">z 0.000</span>
    <span class="w49">毫米</span>
    <span class="layer-cell"><i class="sw black"></i>默认</span>
    <button class="w35">锁定格点</button>
    <button class="w22">正交</button>
    <button class="w35 on">平面模式</button>
    <button class="w35 on">物件锁点</button>
    <button class="w35">智慧轨迹</button>
    <button class="w28 on">操作轴</button>
    <button class="w49 on">记录建构历史</button>
    <button class="w28">过滤器</button>
    <span class="saved">距离上次保存的时间 (分钟): 26</span>
</footer>

<svg class="defs">
    <symbol id="bulb" viewBox="0 0 16 16"><path class="yb" d="M5 11Q2 8 3 5q2-4 5-4t5 4q1 3-2 6z"/><path class="bulb-foot" d="M6 13h4M7 15h2"/></symbol>
    <symbol id="bulb-off" viewBox="0 0 16 16"><path class="bl" d="M5 11Q2 8 3 5q2-4 5-4t5 4q1 3-2 6z"/><path class="bulb-foot" d="M6 13h4M7 15h2"/></symbol>
    <symbol id="lock" viewBox="0 0 16 16"><path class="yl" d="M2 7h9v8H2z"/><path d="M9 7V3q2-3 5 0v3"/></symbol>
</svg>

</body>
</html>
```
FILE: styles.css
```
* {
    box-sizing: border-box;
}
body {
    margin: 0;
    height: 100vh;
    display: flex;
    flex-direction: column;
    overflow: hidden;
    background-color: #dfe3ea;
    color: #222;
    font: 7px/12px "Noto Sans", "Noto Sans CJK SC", sans-serif;
}
button {
    margin: 0;
    padding: 0;
    border: none;
    background: none;
    font: inherit;
    color: inherit;
}
a {
    color: inherit;
    text-decoration: none;
}
svg {
    display: block;
    width: 13px;
    height: 13px;
    fill: none;
    stroke: #333;
}
.defs {
    position: absolute;
    width: 0;
    height: 0;
}

/* icon paints */
.bk { fill: #151515; stroke: none; }
.wh { fill: #fff; }
.wf { fill: #fff; stroke: none; }
.wf2 { fill: #fff; }
.gy { fill: #b5b7ba; }
.lt { stroke: #999; }
.gyl { stroke: #a5a7aa; stroke-width: 2; }
.pale { stroke: #b0b2b6; }
.bl { fill: #6685dc; stroke: #2a3c80; }
.lb { fill: #b4c6f2; stroke: #45588f; }
.vb { fill: #6d88ff; stroke: #273580; }
.cb { fill: #2a8fdc; stroke: #164a86; }
.sb { fill: #62a5d2; stroke: #3a6d95; }
.nv { fill: #2648a0; stroke: #10204e; }
.nvl { stroke: #2b3f8f; stroke-width: 2; }
.cy { fill: #25bdb4; stroke: #0c6e6c; }
.tl { fill: #1d9c96; stroke: #155; }
.dr { fill: #c0202a; stroke: #6a1016; }
.og { fill: #d2722c; stroke: #6b3510; }
.og2 { fill: #f5a623; stroke: #7c4c08; }
.yl { fill: #f3cc35; stroke: #6b5310; }
.yb { fill: #ffe98a; stroke: #b58a20; }
.kh { fill: #a79a52; stroke: #443f20; }
.gn { fill: #59a046; stroke: #234; }
.pk { fill: #d58ac4; stroke: #222; }
.rf { fill: #e22a1c; stroke: none; }
.yf { fill: #fbd90c; stroke: none; }
.gf { fill: #33b045; stroke: none; }
.bf { fill: #2d6fe0; stroke: none; }
.lf { fill: #ee9a3c; stroke: none; }
.mred { fill: #e6173f; stroke: none; }
.rd { stroke: #dc3340; }
.grn { stroke: #2aa53c; }
.lite { stroke: #e4eeff; }
.wl { stroke: #fff; stroke-width: 2; }
.yel { stroke: #ffd23a; stroke-width: 2; }
.thick { stroke-width: 2; }
.nos { stroke: none; }
.check { stroke: #ccc; stroke-dasharray: 1 1; }
.dots { stroke: #445; stroke-width: 2; stroke-dasharray: 3 2; }
.dotb { stroke: #3b8ad0; stroke-width: 2; stroke-dasharray: 2 1; }
.dotgrid { stroke: #4a5da6; stroke-width: 4; stroke-dasharray: 3 2; }
.dotgrid.blk { stroke: #333; stroke-width: 2; stroke-dasharray: 2 2; }
.mesh { stroke: #999; stroke-width: 2; stroke-dasharray: 1 1; }
.ring { fill: #fff; stroke: #2591dc; stroke-width: 3; }
.sph { fill: #1d4fb0; stroke: #0b1d4a; }
.bulb-foot { stroke: #666; }
.tick { stroke: #111; stroke-width: 2; }
.w-r, .w-g, .w-b { stroke: #e0343a; stroke-width: 4; stroke-dasharray: 34 66; }
.w-g { stroke: #36b14a; stroke-dashoffset: -33; }
.w-b { stroke: #4a59d8; stroke-dashoffset: -66; }

.titlebar {
    display: flex;
    align-items: center;
    height: 12px;
    padding-left: 1px;
    gap: 3px;
    background-color: #fff;
}
.titlebar .logo {
    width: 9px;
    height: 9px;
}
.window-buttons {
    display: flex;
    gap: 17px;
    margin-left: auto;
    padding-right: 9px;
}
.window-buttons svg {
    width: 9px;
    height: 9px;
}
.menubar {
    height: 12px;
    padding-left: 4px;
    background-color: #fff;
    white-space: nowrap;
}
.menus {
    display: flex;
    justify-content: space-between;
    max-width: 506px;
}

.command {
    border-top: 2px solid #dfe2e7;
    border-left: 4px solid #e3e6ee;
    background-color: #fff;
    color: #27306e;
}
.history {
    height: 28px;
    padding-top: 3px;
    margin-right: 1px;
    border-right: 8px solid #eee;
    border-bottom: 1px solid #b3b6ba;
}
.history p {
    margin: 0;
    line-height: 12px;
}
.prompt {
    display: flex;
    align-items: center;
    height: 12px;
    font-weight: bold;
}
.prompt label::after {
    content: "";
    display: inline-block;
    width: 1px;
    height: 9px;
    margin-left: 2px;
    vertical-align: middle;
    background-color: #222;
}
.prompt input {
    flex: 1;
    height: 11px;
    padding: 0;
    border: none;
    outline: none;
    font: inherit;
}
.spin {
    width: 8px;
    margin-right: 1px;
}
.spin button {
    display: block;
    width: 8px;
    height: 5px;
    border: 1px solid #ccc;
    background: radial-gradient(#333 1px, #f2f2f2 2px);
}

.tabs {
    display: flex;
    height: 21px;
    padding: 4px 0 0 4px;
    border-bottom: 1px solid #b9bec9;
    overflow: hidden;
    font-family: "DejaVu Sans", "Noto Sans CJK SC", sans-serif;
}
.tabs > button {
    flex: none;
    line-height: 16px;
    padding-left: 8px;
    text-align: left;
    white-space: nowrap;
    background-color: #fff;
    clip-path: polygon(0 2px, 2px 0, calc(100% - 4px) 0, 100% 4px, 100% 100%, 0 100%);
}
.tabs > .w27:first-child {
    width: 38px;
    margin-right: -11px;
    padding-left: 10px;
    clip-path: polygon(0 0, 100% 0, 27px 100%, 0 100%);
}
.tabs > .active {
    z-index: 1;
    text-align: center;
    background-color: #eef0f4;
    clip-path: polygon(0 100%, 12px 0, calc(100% - 2px) 0, 100% 2px, 100% 100%);
}
.tabs > .last {
    flex: 1;
}
.w22 { width: 22px; }
.w27 { width: 27px; }
.w28 { width: 28px; }
.w29 { width: 29px; }
.w30 { width: 30px; }
.w34 { width: 34px; }
.w35 { width: 35px; }
.w36 { width: 36px; }
.w42 { width: 42px; }
.w49 { width: 49px; }
.w50 { width: 50px; }
.w52 { width: 52px; }
.w58 { width: 58px; }
.w60 { width: 60px; }
.w68 { width: 68px; }
.tabs-end {
    flex: none;
    display: flex;
    align-items: center;
    height: 16px;
}
.tabs-end svg {
    width: 9px;
    height: 9px;
    stroke: #aaa;
}
.chev {
    width: 9px;
    height: 16px;
    background-color: #cdd0e0;
    font-weight: bold;
}

.toolbar {
    display: flex;
    height: 21px;
    padding-left: 4px;
    background: linear-gradient(#f1f3f6, #dde1e8);
}
.group {
    display: grid;
    grid-auto-flow: column;
    grid-auto-columns: 1fr;
    justify-items: center;
    flex: none;
    height: 17px;
    align-items: center;
}
.g50 { width: 788px; }
.g10 {
    width: 159px;
    margin-left: 2px;
    border-left: 1px solid #c3c7ce;
}
.g4 {
    width: 64px;
    margin-left: 2px;
    border-left: 1px solid #c3c7ce;
}
.fly {
    position: relative;
}
.fly::after {
    content: "";
    position: absolute;
    right: -2px;
    bottom: -1px;
    border: 2px solid;
    border-color: transparent #444 #444 transparent;
}

main {
    flex: 1;
    display: flex;
    min-height: 0;
}
.sidebar {
    display: grid;
    grid-template-columns: 16px 16px;
    grid-auto-rows: 1fr;
    place-items: center;
    width: 39px;
    margin-bottom: 12px;
    padding-top: 1px;
    border-top: 3px solid #cdd1d9;
}
.sidebar .more {
    font-size: 9px;
    font-weight: bold;
}

.viewports {
    flex: 1;
    display: grid;
    grid-template: 1fr 1fr / 1fr 1fr;
    gap: 2px;
    padding: 1px 0 0 1px;
    min-width: 0;
    background-color: #c6cad3;
}
.viewport {
    position: relative;
    min-width: 0;
    min-height: 0;
    background: linear-gradient(#f2f3f6, #c6d4f0 55%, #9ab6ee);
}
.scene {
    width: 100%;
    height: 100%;
    stroke: none;
}
.scene text {
    font: 9px "DejaVu Sans", sans-serif;
}
.ax-x { fill: #e0203a; stroke: #e0203a; stroke-width: .3; }
.ax-y { fill: #35e050; stroke: #35e050; stroke-width: .3; }
.ax-z { fill: #3338e0; stroke: #3338e0; stroke-width: .3; }
.vp-label {
    position: absolute;
    left: 0;
    top: 0;
    display: flex;
    width: 38px;
    height: 11px;
    background-color: #c4c7ce;
    line-height: 11px;
    font-size: 8px;
}
.vp-label span {
    width: 31px;
    padding-left: 4px;
}
.vp-label button {
    width: 7px;
    border-left: 1px solid #888;
}
.vp-label button::after {
    content: "";
    display: block;
    width: 0;
    margin: 2px auto 0;
    border: 2px solid transparent;
    border-top-color: #333;
}
.vp-label.current {
    background-color: #078bdd;
    font-weight: bold;
}

.layers {
    flex: none;
    display: flex;
    flex-direction: column;
    width: 130px;
    margin: 5px 0 1px 4px;
    border: 1px solid #c3c7d0;
    background-color: #fff;
    font-size: 8px;
}
.layer-tools {
    display: flex;
    justify-content: space-between;
    align-items: center;
    height: 22px;
    padding: 0 0 0 4px;
}
.layer-tools svg {
    width: 9px;
    height: 9px;
}
.layers table {
    width: 100%;
    border-collapse: collapse;
    table-layout: fixed;
}
.layers tr {
    height: 12px;
}
.layers th, .layers td {
    height: 12px;
    padding: 0;
    line-height: 11px;
    border-bottom: 1px solid #f2f2f2;
    font-weight: normal;
    text-align: left;
    white-space: nowrap;
}
.layers th {
    width: 10px;
    border-right: 1px solid #eee;
}
.layers th.name {
    width: 70px;
}
.layers th.mat {
    width: auto;
    padding-left: 2px;
    border-right: none;
    font-size: 7px;
}
.layers th:first-child, .layers td:first-child {
    padding-left: 4px;
}
.layers td svg {
    width: 8px;
    height: 8px;
    margin: 0 auto;
}
.layers .default td {
    font-weight: bold;
}
.sw {
    display: block;
    width: 8px;
    height: 8px;
    margin: 0 auto;
    border: 1px solid #333;
}
.sw.black { background-color: #000; }
.sw.red { background-color: #f00; }
.sw.blue { background-color: #0a8cff; }
.sw.green { background-color: #0bdc0b; }
.sw.pink { background-color: #f0078c; }
.scrollbar {
    margin-top: auto;
    padding: 4px 0 4px 9px;
    background-color: #eee;
}
.thumb {
    width: 45px;
    height: 1px;
    background-color: #808080;
}

.side-tabs {
    flex: none;
    display: flex;
    flex-direction: column;
    width: 17px;
    padding-top: 5px;
    font-size: 8px;
}
.side-tabs button {
    flex: 1;
    display: flex;
    align-items: center;
    gap: 2px;
    min-height: 0;
    width: 16px;
    padding-top: 2px;
    background-color: #fff;
    writing-mode: vertical-rl;
    line-height: 16px;
    white-space: nowrap;
    overflow: hidden;
    clip-path: polygon(0 7px, 6px 0, 100% 0, 100% calc(100% - 9px), calc(100% - 8px) 100%, 0 100%);
}
.side-tabs .active {
    clip-path: polygon(0 0, 100% 0, 100% calc(100% - 9px), calc(100% - 8px) 100%, 0 100%);
}
.side-tabs svg {
    flex: none;
    width: 9px;
    height: 9px;
}
.side-tabs .gear {
    align-self: flex-end;
    stroke: #b4b9d0;
}

.osnap {
    flex: none;
    display: flex;
    align-items: center;
    justify-content: space-between;
    max-width: 381px;
    height: 20px;
    padding: 2px 0 0 5px;
}
.osnap label {
    display: flex;
    align-items: center;
    gap: 2px;
}
.osnap .plain {
    margin-left: 4px;
}
.osnap input {
    appearance: none;
    width: 7px;
    height: 7px;
    margin: 0;
    border: 1px solid #777;
    border-radius: 2px;
    background-color: #fff;
}
.osnap input:checked {
    border-color: #0a62b4;
    background: radial-gradient(#9cc8ee 1px, #0a62b4 2px);
}
.osnap .plain input {
    border-color: #e8e8e8;
}

.status {
    flex: none;
    display: flex;
    height: 12px;
    border-top: 1px solid #c6cad2;
    overflow: hidden;
    white-space: nowrap;
}
.status > * {
    flex: none;
    border-right: 1px solid #b9bdc6;
    text-align: center;
    line-height: 12px;
}
.status .num {
    font-size: 8px;
}
.status .layer-cell {
    display: flex;
    align-items: center;
    gap: 1px;
    width: 140px;
    padding-left: 2px;
}
.status .sw {
    margin: 0;
}
.status .on {
    background-color: #e9f1f8;
    font-weight: bold;
}
.status .saved {
    padding-left: 1px;
    border: none;
}
```
